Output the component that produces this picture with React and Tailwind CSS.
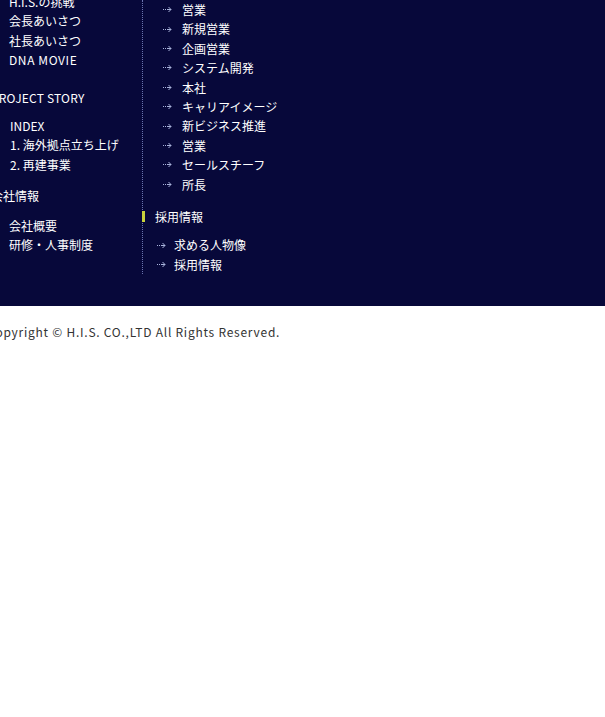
const font = { fontFamily: '"Noto Sans CJK JP", "Liberation Sans", sans-serif' };

function Arrow() {
  return (
    <svg width="9" height="7" viewBox="0 0 9 7" className="shrink-0">
      <path d="M0 3.5h1M2 3.5h1M4 3.5h4" stroke="#aab4dc" strokeWidth="1" />
      <path d="M5.5 1l2.5 2.5L5.5 6" stroke="#aab4dc" strokeWidth="1" fill="none" />
    </svg>
  );
}

const rowCls = "h-[19.4px] leading-[19.4px] whitespace-nowrap";

function LeftItem({ children, indent = "pl-[18px]" }) {
  return <div className={`${rowCls} ${indent}`}>{children}</div>;
}

function SubLink({ children, big }) {
  return (
    <div className={`${rowCls} flex items-center ${big ? "pl-[20px]" : "pl-[14px]"}`}>
      <Arrow />
      <span className={big ? "ml-[10px]" : "ml-[8px]"}>{children}</span>
    </div>
  );
}

const careers = ["営業", "新規営業", "企画営業", "システム開発", "本社", "キャリアイメージ", "新ビジネス推進", "営業", "セールスチーフ", "所長"];

export default function App() {
  return (
    <div className="w-[605px] min-h-[717px] bg-white overflow-hidden text-[12px]" style={font}>
      <div className="bg-[#07083a] text-white h-[306px] overflow-hidden">
        <div className="flex -ml-[9px]">
          <div className="w-[151px] -mt-[8px] shrink-0">
            <LeftItem>H.I.S.の挑戦</LeftItem>
            <LeftItem>会長あいさつ</LeftItem>
            <LeftItem>社長あいさつ</LeftItem>
            <LeftItem><span className="tracking-[0.6px]">DNA MOVIE</span></LeftItem>
            <div className={`${rowCls} mt-[18px] tracking-[0.2px]`}>PROJECT STORY</div>
            <div className="mt-[9px]">
              <LeftItem indent="pl-[19px]">INDEX</LeftItem>
              <LeftItem indent="pl-[19px]">1. 海外拠点立ち上げ</LeftItem>
              <LeftItem indent="pl-[19px]">2. 再建事業</LeftItem>
            </div>
            <div className={`${rowCls} mt-[12px]`}>会社情報</div>
            <div className="mt-[10px]">
              <LeftItem>会社概要</LeftItem>
              <LeftItem>研修・人事制度</LeftItem>
            </div>
          </div>
          <div className="border-l border-dotted border-[#6c74b0] self-start w-[200px]">
            {careers.map((c, i) => (
              <SubLink key={i} big>{c}</SubLink>
            ))}
            <div className={`${rowCls} mt-[12.6px] flex items-center`}>
              <span className="w-[3px] h-[11px] bg-[#c8d23c] -ml-px" />
              <span className="ml-[10px]">採用情報</span>
            </div>
            <div className="mt-[9.6px]">
              <SubLink>求める人物像</SubLink>
              <SubLink>採用情報</SubLink>
            </div>
          </div>
        </div>
      </div>
      <div className="-ml-[13px] mt-[15.5px] leading-[19px] text-[#333333] whitespace-nowrap tracking-[0.75px]">
        Copyright © H.I.S. CO.,LTD All Rights Reserved.
      </div>
    </div>
  );
}
